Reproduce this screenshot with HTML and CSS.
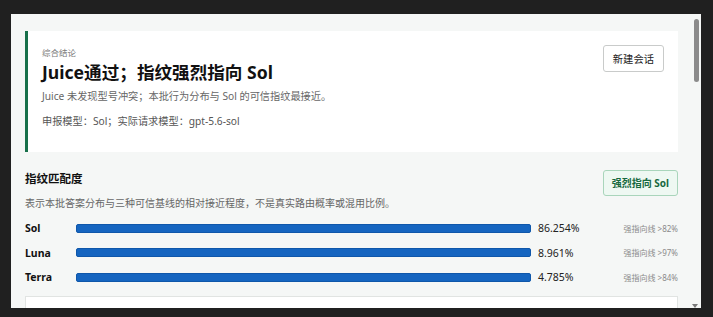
FILE: index.html
```html
<!DOCTYPE html>
<html lang="zh-CN">
<head>
  <meta charset="UTF-8" />
  <meta name="viewport" content="width=device-width, initial-scale=1.0" />
  <title>指纹检测结果</title>
  <link rel="stylesheet" href="styles.css">
</head>
<body>
  <div class="window">
    <main class="page">
      <section class="summary">
        <div class="summary-text">
          <div class="eyebrow">综合结论</div>
          <h1>Juice通过；指纹强烈指向 Sol</h1>
          <p class="lead">Juice 未发现型号冲突；本批行为分布与 Sol 的可信指纹最接近。</p>
          <p class="meta">申报模型：Sol；实际请求模型：gpt-5.6-sol</p>
        </div>
        <button class="btn">新建会话</button>
      </section>

      <section class="match">
        <div class="match-head">
          <h2>指纹匹配度</h2>
          <span class="badge">强烈指向 Sol</span>
        </div>
        <p class="desc">表示本批答案分布与三种可信基线的相对接近程度，不是真实路由概率或混用比例。</p>
        <div class="rows">
          <div class="row">
            <span class="name">Sol</span>
            <div class="bar"></div>
            <span class="pct">86.254%</span>
            <span class="note">强指向线 &gt;82%</span>
          </div>
          <div class="row">
            <span class="name">Luna</span>
            <div class="bar"></div>
            <span class="pct">8.961%</span>
            <span class="note">强指向线 &gt;97%</span>
          </div>
          <div class="row">
            <span class="name">Terra</span>
            <div class="bar"></div>
            <span class="pct">4.785%</span>
            <span class="note">强指向线 &gt;84%</span>
          </div>
        </div>
      </section>

      <section class="card">
        <h3>题库验证角色卡组合结果</h3>
      </section>
    </main>
    <div class="scrollbar">
      <div class="thumb"></div>
      <div class="arrow"></div>
    </div>
  </div>
</body>
</html>
```

FILE: styles.css
```css
html, body {
  margin: 0;
  padding: 0;
  height: 317px;
  overflow: hidden;
  background: #202020;
  font-family: "Noto Sans", "Noto Sans CJK SC", sans-serif;
}
.window {
  display: flex;
  margin: 14px 12px 0 11px;
  height: 294px;
  overflow: hidden;
  background: #f5f7f6;
}
.page {
  flex: 1;
  padding: 17px 11px 0 14px;
  min-width: 0;
}
.summary {
  display: flex;
  justify-content: space-between;
  align-items: flex-start;
  background: #fff;
  border-left: 3px solid #17704a;
  padding: 14px 14px 24px 14px;
}
.eyebrow {
  font-size: 8.5px;
  line-height: 16px;
  color: #7a7a7a;
}
h1 {
  margin: 0;
  font-size: 17.6px;
  line-height: 22px;
  font-weight: 700;
  color: #111;
}
.lead, .meta {
  margin: 6px 0 0;
  font-size: 10.2px;
  line-height: 14px;
  color: #666;
}
.meta {
  margin-top: 11px;
  color: #555;
}
.btn {
  height: 27px;
  padding: 0 9px;
  font-family: inherit;
  font-size: 10.3px;
  color: #222;
  background: #fff;
  border: 1px solid #c9cbca;
  border-radius: 3px;
}
.match {
  margin-top: 18px;
}
.match-head {
  display: flex;
  justify-content: space-between;
  align-items: flex-start;
}
h2 {
  margin: 0;
  font-size: 11.5px;
  line-height: 18px;
  font-weight: 700;
  color: #111;
}
.badge {
  padding: 0 8px;
  line-height: 24px;
  font-size: 10px;
  font-weight: 700;
  color: #17693f;
  background: #eef8f2;
  border: 1px solid #a9d5bb;
  border-radius: 3px;
}
.desc {
  margin: 0;
  font-size: 10px;
  line-height: 14px;
  color: #666;
}
.rows {
  display: flex;
  flex-direction: column;
  gap: 10px;
  margin-top: 11px;
}
.row {
  display: grid;
  grid-template-columns: 51px 1fr 87px 60px;
  align-items: center;
  height: 14.5px;
}
.name {
  font-size: 10.5px;
  font-weight: 700;
  color: #111;
}
.bar {
  height: 9px;
  background: #1565c0;
  border: 1px solid #0f57aa;
  border-radius: 2px;
  box-sizing: border-box;
}
.pct {
  padding-left: 7px;
  font-size: 10.5px;
  color: #222;
}
.note {
  text-align: right;
  font-size: 8px;
  color: #8a8a8a;
  white-space: nowrap;
}
.card {
  margin-top: 11.5px;
  background: #fff;
  border: 1px solid #e1e4e2;
  padding: 9px 17px;
}
h3 {
  margin: 0;
  font-size: 11px;
  font-weight: 700;
  color: #111;
}
.scrollbar {
  display: flex;
  flex-direction: column;
  width: 12px;
  padding-top: 5px;
}
.thumb {
  width: 5px;
  height: 63px;
  margin-left: 5px;
  background: #8b8b8b;
  border-radius: 3px;
}
.arrow {
  margin: auto 0 0 3px;
  width: 0;
  height: 0;
  border-left: 3px solid transparent;
  border-right: 3px solid transparent;
  border-top: 4px solid #7a7a7a;
}
```
